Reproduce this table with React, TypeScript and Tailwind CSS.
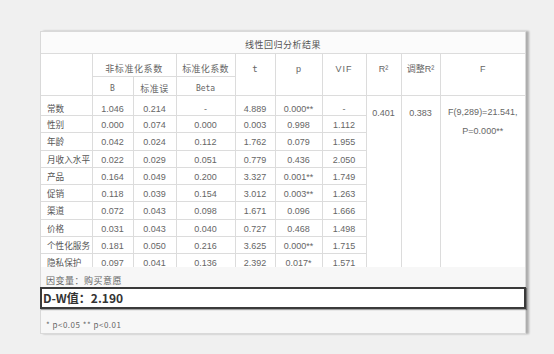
import React from 'react';

const rows: string[][] = [
  ['常数', '1.046', '0.214', '-', '4.889', '0.000**', '-'],
  ['性别', '0.000', '0.074', '0.000', '0.003', '0.998', '1.112'],
  ['年龄', '0.042', '0.024', '0.112', '1.762', '0.079', '1.955'],
  ['月收入水平', '0.022', '0.029', '0.051', '0.779', '0.436', '2.050'],
  ['产品', '0.164', '0.049', '0.200', '3.327', '0.001**', '1.749'],
  ['促销', '0.118', '0.039', '0.154', '3.012', '0.003**', '1.263'],
  ['渠道', '0.072', '0.043', '0.098', '1.671', '0.096', '1.666'],
  ['价格', '0.031', '0.043', '0.040', '0.727', '0.468', '1.498'],
  ['个性化服务', '0.181', '0.050', '0.216', '3.625', '0.000**', '1.715'],
  ['隐私保护', '0.097', '0.041', '0.136', '2.392', '0.017*', '1.571'],
];

const cell = 'border border-[#dcdcdc] align-top leading-[12px] whitespace-nowrap p-0';
const mono = { fontFamily: '"DejaVu Sans Mono", monospace' };

export default function App() {
  return (
    <div
      className="min-h-screen w-full bg-[#f0f0f0] pt-[31px] pl-[40px] text-[#666]"
      style={{ fontFamily: '"Liberation Sans", "Noto Sans CJK SC", sans-serif' }}
    >
      <div className="w-[486px] h-[303px] flex flex-col border border-[#d9d9d9] bg-[#f7f7f7] shadow-[3px_0_2px_rgba(0,0,0,0.28)]">
        {/* table area, clipped at the bottom */}
        <div className="h-[235px] overflow-hidden bg-white shrink-0">
          <div className="h-[22px] border-b border-[#dcdcdc] bg-[#fbfbfb] pt-[7px] text-center text-[9px] leading-[12px] tracking-[0.5px] text-[#555]">
            线性回归分析结果
          </div>
          <table className="table-fixed border-collapse w-[484px] text-[9px] text-center border-hidden">
            <colgroup>
              <col className="w-[51px]" />
              <col className="w-[41px]" />
              <col className="w-[43px]" />
              <col className="w-[59px]" />
              <col className="w-[40px]" />
              <col className="w-[47px]" />
              <col className="w-[44px]" />
              <col className="w-[35px]" />
              <col className="w-[39px]" />
              <col className="w-[85px]" />
            </colgroup>
            <thead>
              <tr className="h-[22px]">
                <th rowSpan={2} className={cell}></th>
                <th colSpan={2} className={`${cell} font-normal pt-[9px] tracking-[0.6px]`}>非标准化系数</th>
                <th className={`${cell} font-normal pt-[9px] tracking-[0.3px]`}>标准化系数</th>
                <th rowSpan={2} className={`${cell} font-normal pt-[9px]`} style={mono}>t</th>
                <th rowSpan={2} className={`${cell} font-normal pt-[9px]`}>p</th>
                <th rowSpan={2} className={`${cell} font-normal pt-[9px] tracking-[1px]`}>VIF</th>
                <th rowSpan={2} className={`${cell} font-normal pt-[9px]`}>R²</th>
                <th rowSpan={2} className={`${cell} font-normal pt-[9px]`}>调整R²</th>
                <th rowSpan={2} className={`${cell} font-normal pt-[9px]`}>F</th>
              </tr>
              <tr className="h-[19px]">
                <th className={`${cell} font-normal pt-[6px] text-[8px]`} style={mono}>B</th>
                <th className={`${cell} font-normal pt-[6px] tracking-[0.5px]`}>标准误</th>
                <th className={`${cell} font-normal pt-[6px] text-[8px]`} style={mono}>Beta</th>
              </tr>
            </thead>
            <tbody>
              {rows.map((r, i) => (
                <tr key={r[0]} className={i === 0 ? 'h-[20.5px]' : 'h-[17.3px]'}>
                  <td className={`${cell} text-left pl-[6px] text-[8.6px] text-[#555] ${i === 0 ? 'pt-[7px]' : 'pt-[3px]'}`}>{r[0]}</td>
                  {r.slice(1).map((v, j) => (
                    <td key={j} className={`${cell} ${i === 0 ? 'pt-[7px]' : 'pt-[3px]'}`}>
                      {v}
                    </td>
                  ))}
                  {i === 0 && (
                    <>
                      <td rowSpan={10} className={`${cell} pt-[11px]`}>0.401</td>
                      <td rowSpan={10} className={`${cell} pt-[11px]`}>0.383</td>
                      <td rowSpan={10} className={`${cell} pt-[7px] leading-[19px]`}>
                        F(9,289)=21.541,
                        <br />
                        P=0.000**
                      </td>
                    </>
                  )}
                </tr>
              ))}
            </tbody>
          </table>
        </div>

        <div className="h-[20px] pt-[8px] pl-[5px] text-[9px] leading-[12px] tracking-[0.5px] text-[#666]">
          因变量：购买意愿
        </div>

        <div className="h-[23px] -ml-px w-[486px] flex items-center bg-white border-2 border-[#3a3a3a] pl-[1px] shadow-[1px_1px_1px_rgba(0,0,0,0.35)]">
          <span className="text-[12px] font-bold text-[#333]" style={{ fontFamily: '"Noto Sans CJK SC", sans-serif' }}>
            D-W值：2.190
          </span>
        </div>

        <div className="h-[24px] pt-[10px] pl-[5px] text-[8px] leading-[12px] tracking-[0.5px] text-[#666]" style={{ fontFamily: '"Noto Sans CJK SC", sans-serif' }}>
          * p&lt;0.05 ** p&lt;0.01
        </div>
      </div>
    </div>
  );
}
